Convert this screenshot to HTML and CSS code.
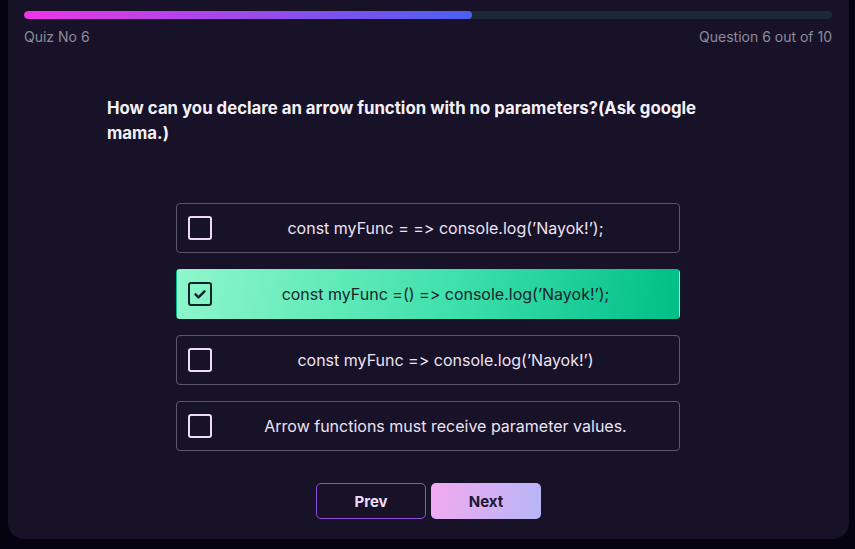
FILE: index.html
```html
<!DOCTYPE html>
<html>
<head>
<meta charset="utf-8">
<link rel="stylesheet" href="styles.css">
</head>
<body>
<div class="card">
  <div class="progress"><div class="progress-fill" style="width:55.5%"></div></div>
  <div class="meta">
    <span>Quiz No 6</span>
    <span class="count">Question 6 out of 10</span>
  </div>
  <h2 class="question">How can you declare an arrow function with no parameters?(Ask google mama.)</h2>
  <div class="options">
    <div class="option">
      <span class="box"></span>
      <span class="label">const myFunc = =&gt; console.log(’Nayok!’);</span>
    </div>
    <div class="option selected">
      <span class="box"><svg viewBox="0 0 24 24" width="18" height="18"><path d="M6 12.5l4 4 8-8" fill="none" stroke="#14222a" stroke-width="3.2" stroke-linecap="round" stroke-linejoin="round"/></svg></span>
      <span class="label">const myFunc =() =&gt; console.log(’Nayok!’);</span>
    </div>
    <div class="option">
      <span class="box"></span>
      <span class="label">const myFunc =&gt; console.log(’Nayok!’)</span>
    </div>
    <div class="option">
      <span class="box"></span>
      <span class="label">Arrow functions must receive parameter values.</span>
    </div>
  </div>
  <div class="nav">
    <button class="btn prev">Prev</button>
    <button class="btn next">Next</button>
  </div>
</div>
</body>
</html>
```
FILE: styles.css
```css
html, body { height: 100%; }
body {
  margin: 0 6px 0 8px;
  background: #04030f;
  font-family: Inter, "Noto Sans", sans-serif;
  font-variant-ligatures: none;
  font-feature-settings: "calt" 0, "liga" 0;
  overflow: hidden;
}
.card {
  margin-top: -12px;
  height: 551px;
  box-sizing: border-box;
  background: #181229;
  border-radius: 16px;
  padding: 23px 17px 0 16px;
}
.progress {
  height: 8px;
  border-radius: 4px;
  background: #1b2838;
  overflow: hidden;
}
.progress-fill {
  height: 100%;
  border-radius: 4px;
  background: linear-gradient(90deg, #ee35e6, #4b5ff0);
}
.meta {
  display: flex;
  justify-content: space-between;
  margin-top: 9px;
  font-size: 14px;
  color: #8d8a99;
  line-height: 18px;
}
.question {
  margin: 50px 110px 0 83px;
  font-size: 16.8px;
  font-weight: 700;
  color: #f3f1f7;
  line-height: 25px;
}
.options {
  margin: 57px 0 0 152px;
  width: 504px;
  display: flex;
  flex-direction: column;
  gap: 16px;
}
.option {
  height: 50px;
  box-sizing: border-box;
  border: 1px solid #5d5470;
  border-radius: 4px;
  display: flex;
  align-items: center;
  padding-left: 11px;
  color: #ece2f3;
  font-size: 16px;
}
.box {
  width: 24px;
  height: 24px;
  box-sizing: border-box;
  border: 2px solid #ecdcf5;
  border-radius: 3px;
  flex: none;
  display: flex;
  align-items: center;
  justify-content: center;
}
.label {
  flex: 1;
  text-align: center;
}
.option.selected {
  border-color: transparent;
  background: linear-gradient(100deg, #8ff7cc 0%, #3ee0ac 55%, #00be87 100%);
  color: #16262a;
}
.option.selected .box {
  border-color: #14222a;
}
.nav {
  margin: 32px 0 0 292px;
  display: flex;
  gap: 5px;
}
.btn {
  width: 110px;
  height: 36px;
  border-radius: 5px;
  font-family: Inter, sans-serif;
  font-size: 15px;
  font-weight: 700;
}
.prev {
  background: transparent;
  border: 1px solid #8d4fdc;
  color: #ecdcf5;
}
.next {
  border: none;
  background: linear-gradient(100deg, #f2a9f0, #b7b6f8);
  color: #201732;
}
```
